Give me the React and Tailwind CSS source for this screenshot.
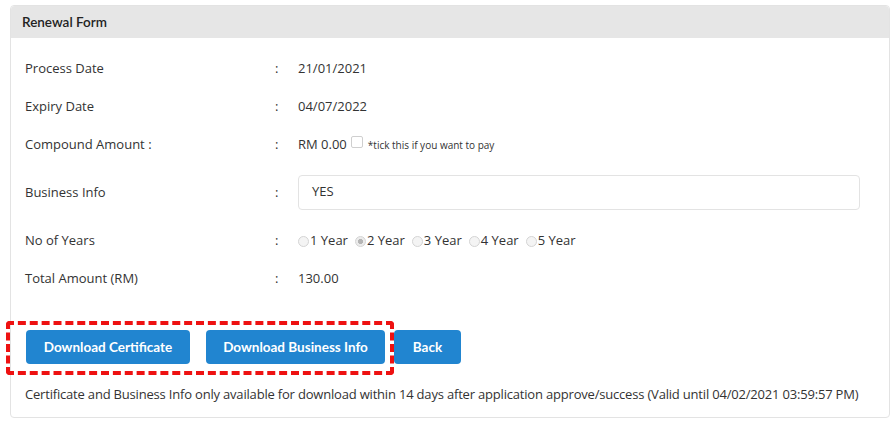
import React from 'react'

const body = { fontFamily: '"Open Sans", "Liberation Sans", sans-serif' }

const Row = ({ label, children, className = 'h-[38px]' }) => (
  <div className={`flex items-center ${className}`}>
    <div className="w-[250px] shrink-0">{label}</div>
    <div className="w-[23px] shrink-0">:</div>
    <div className="flex flex-1 items-center">{children}</div>
  </div>
)

const Radio = ({ checked, label }) => (
  <label className="mr-[7px] flex items-center">
    <span
      className={`inline-block h-[11px] w-[11px] rounded-full border border-[#d4d4d4] ${
        checked ? 'bg-[radial-gradient(circle,#b5b5b5_0,#b5b5b5_35%,#ececec_45%)]' : 'bg-[#f4f4f4]'
      }`}
    />
    <span className="ml-[1px]">{label}</span>
  </label>
)

const btn = 'h-[34px] rounded-[4px] bg-[#2185d0] text-[13.5px] font-bold text-white'

export default function App() {
  return (
    <div className="h-[421px] w-[892px] bg-white pl-[10px] pr-[2px] pt-[5px]" style={body}>
      <div className="rounded-[4px] border border-[#e3e3e3] text-[13px] text-[#333]">
        <div
          className="flex h-[32px] items-center rounded-t-[4px] bg-[#e6e6e6] px-[11px] text-[13.5px] font-semibold text-[#222]"
          style={{ fontFamily: 'Lato, sans-serif' }}
        >
          Renewal Form
        </div>

        <div className="px-[14px] pt-[12px]">
          <Row label="Process Date">21/01/2021</Row>
          <Row label="Expiry Date">04/07/2022</Row>
          <Row label="Compound Amount :">
            RM 0.00
            <span className="ml-[4px] inline-block h-[12px] w-[12px] -translate-y-[3px] rounded-[2px] border border-[#cfcfcf] bg-white" />
            <span className="ml-[5px] text-[10px]">*tick this if you want to pay</span>
          </Row>
          <Row label="Business Info" className="h-[58px]">
            <div className="-mt-[2px] flex h-[35px] w-[562px] items-center rounded-[4px] border border-[#e3e3e3] px-[13px]">
              YES
            </div>
          </Row>
          <Row label="No of Years">
            <Radio label="1 Year" />
            <Radio label="2 Year" checked />
            <Radio label="3 Year" />
            <Radio label="4 Year" />
            <Radio label="5 Year" />
          </Row>
          <Row label="Total Amount (RM)">130.00</Row>

          <div
            className="relative mt-[32px] flex gap-[16px] pl-[1px]"
            style={{ fontFamily: 'Lato, sans-serif' }}
          >
            <button className={`${btn} w-[164px]`}>Download Certificate</button>
            <button className={`${btn} w-[179px]`}>Download Business Info</button>
            <button className={`${btn} -ml-[7px] w-[67px]`}>Back</button>
            <div className="pointer-events-none absolute -left-[19px] -top-[9px] h-[54px] w-[388px] rounded-[4px] border-[4px] border-dashed border-[#ee1111]" />
          </div>

          <div className="pb-[12px] pt-[21px] text-[13px] tracking-[-0.19px]">
            Certificate and Business Info only available for download within 14 days after application approve/success (Valid until 04/02/2021 03:59:57 PM)
          </div>
        </div>
      </div>
    </div>
  )
}
